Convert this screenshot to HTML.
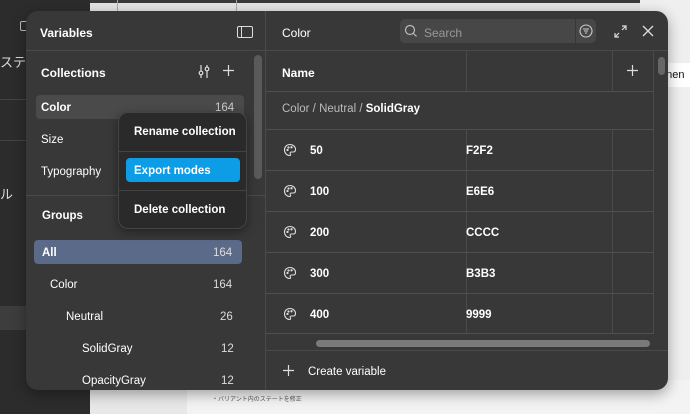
<!DOCTYPE html>
<html><head><meta charset="utf-8"><style>
*{margin:0;padding:0;box-sizing:border-box}
body{width:690px;height:414px;overflow:hidden;position:relative;background:#2c2c2c;font-family:"Liberation Sans","Noto Sans CJK JP",sans-serif;color:#fff;font-size:11.5px}
.a{position:absolute}
.b{font-weight:bold}
.vl{position:absolute;width:1px;background:#4a4a4a}
.cell{position:absolute;height:1px;background:#4f4f4f}
.t{transform:translateY(1px)}
</style></head><body>
<div class="a" style="left:90px;top:0;width:600px;height:11px;background:#e4e4e4"></div>
<div class="a" style="left:90px;top:0;width:600px;height:3px;background:#3a3a3a"></div>
<div class="a" style="left:117px;top:0;width:1px;height:11px;background:#aaa"></div>
<div class="a" style="left:236px;top:0;width:1px;height:11px;background:#aaa"></div>
<div class="a" style="left:640px;top:0;width:50px;height:414px;background:#efefef"></div>
<div class="a" style="left:660px;top:63px;width:30px;height:24px;background:#fff;color:#111;font-size:11px;line-height:24px">onen</div>
<div class="a" style="left:90px;top:380px;width:600px;height:34px;background:#f3f3f3"></div>
<div class="a" style="left:90px;top:380px;width:97px;height:34px;background:#e8e8e8"></div>
<div class="a" style="left:212px;top:394px;font-size:6px;color:#555">・バリアント内のステートを修正</div>
<div class="a" style="left:0;top:99px;width:26px;height:1px;background:#444"></div>
<div class="a" style="left:0;top:140px;width:26px;height:1px;background:#444"></div>
<div class="a" style="left:0;top:306px;width:26px;height:24px;background:#3d3d3d"></div>
<div class="a" style="left:0;top:52px;font-size:13px;color:#ddd">ステム</div>
<div class="a" style="left:0;top:184px;font-size:13px;color:#ddd">ル</div>
<div class="a" style="left:20px;top:21px;width:8px;height:10px;border:1px solid #bbb;border-radius:2px"></div>
<div class="a t" style="left:26px;top:11px;width:642px;height:379px;background:#383838;border-radius:12px;box-shadow:0 4px 14px rgba(0,0,0,.35);overflow:hidden;transform:none">
 <div class="a b t" style="left:14px;top:14px;font-size:12px">Variables</div>
 <div class="a" style="left:211px;top:15px;width:16px;height:12px;border:1.3px solid #ddd;border-radius:2px"><div class="a" style="left:3px;top:0;width:1.3px;height:10px;background:#ddd"></div></div>
 <div class="a" style="left:0;top:39px;width:642px;height:1px;background:#4a4a4a"></div>
 <div class="a" style="left:239px;top:0;width:1px;height:379px;background:#4a4a4a"></div>
 <div class="a b t" style="left:15px;top:54px;font-size:12px">Collections</div>
 <svg class="a" style="left:171px;top:53px" width="14" height="14" viewBox="0 0 14 14" fill="none" stroke="#ddd" stroke-width="1.2"><path d="M4 1v13M10 1v13"/><circle cx="4" cy="9" r="1.8" fill="#383838"/><circle cx="10" cy="5" r="1.8" fill="#383838"/></svg>
 <svg class="a" style="left:197px;top:54px" width="11" height="11" viewBox="0 0 11 11" stroke="#ddd" stroke-width="1.2"><path d="M5.5 0v11M0 5.5h11"/></svg>
 <div class="a" style="left:10px;top:84px;width:208px;height:24px;background:#4a4a4a;border-radius:4px"></div>
 <div class="a b t" style="left:15px;top:90px">Color</div>
 <div class="a t" style="left:189px;top:90px;color:#ccc">164</div>
 <div class="a t" style="left:15px;top:122px">Size</div>
 <div class="a t" style="left:15px;top:154px">Typography</div>
 <div class="a" style="left:0;top:184px;width:239px;height:1px;background:#4a4a4a"></div>
 <div class="a b t" style="left:16px;top:198px">Groups</div>
 <div class="a" style="left:8px;top:229px;width:208px;height:24px;background:#5a6a88;border-radius:4px"></div>
 <div class="a b t" style="left:16px;top:235px">All</div>
 <div class="a t" style="left:187px;top:235px;color:#ddd">164</div>
 <div class="a t" style="left:24px;top:267px">Color</div><div class="a t" style="left:187px;top:267px;color:#ddd">164</div>
 <div class="a t" style="left:40px;top:299px">Neutral</div><div class="a t" style="left:194px;top:299px;color:#ddd">26</div>
 <div class="a t" style="left:56px;top:331px">SolidGray</div><div class="a t" style="left:195px;top:331px;color:#ddd">12</div>
 <div class="a t" style="left:56px;top:363px">OpacityGray</div><div class="a t" style="left:195px;top:363px;color:#ddd">12</div>
 <div class="a" style="left:228px;top:44px;width:8px;height:124px;background:#5a5a5a;border-radius:4px"></div>
 <div class="a t" style="left:256px;top:14px;font-size:12px">Color</div>
 <div class="a" style="left:374px;top:8px;width:196px;height:24px;background:#474747;border-radius:5px"></div>
 <div class="a" style="left:549px;top:8px;width:1px;height:24px;background:#383838"></div>
 <svg class="a" style="left:378px;top:13px" width="14" height="14" viewBox="0 0 14 14" fill="none" stroke="#bbb" stroke-width="1.2"><circle cx="6" cy="6" r="4.5"/><path d="M9.5 9.5l3 3"/></svg>
 <div class="a t" style="left:398px;top:14px;color:#999;font-size:12px">Search</div>
 <svg class="a" style="left:553px;top:13px" width="14" height="14" viewBox="0 0 14 14" fill="none" stroke="#ccc" stroke-width="1.1"><circle cx="7" cy="7" r="6"/><path d="M4 5h6M5 7h4M6 9h2"/></svg>
 <svg class="a" style="left:588px;top:14px" width="13" height="13" viewBox="0 0 13 13" fill="none" stroke="#ddd" stroke-width="1.2"><path d="M8 1h4v4M12 1L8 5M5 12H1V8M1 12l4-4"/></svg>
 <svg class="a" style="left:616px;top:14px" width="12" height="12" viewBox="0 0 12 12" fill="none" stroke="#ddd" stroke-width="1.3"><path d="M1 1l10 10M11 1L1 11"/></svg>
 <div class="a b t" style="left:256px;top:54px;font-size:12px">Name</div>
 <svg class="a" style="left:601px;top:54px" width="11" height="11" viewBox="0 0 11 11" stroke="#ddd" stroke-width="1.2"><path d="M5.5 0v11M0 5.5h11"/></svg>
 <div class="a t" style="left:256px;top:91px;color:#bbb">Color / Neutral / <b style="color:#fff">SolidGray</b></div>
 <div class="vl" style="left:440px;top:40px;height:40px"></div>
 <div class="vl" style="left:586px;top:40px;height:40px"></div>
 <div class="vl" style="left:440px;top:118px;height:204px"></div>
 <div class="vl" style="left:586px;top:118px;height:204px"></div>
 <div class="vl" style="left:627px;top:40px;height:283px"></div>
 <div class="cell" style="left:240px;top:80px;width:388px"></div>
 <div class="cell" style="left:240px;top:118px;width:388px"></div>
 <div class="cell" style="left:240px;top:159px;width:388px"></div>
 <div class="cell" style="left:240px;top:200px;width:388px"></div>
 <div class="cell" style="left:240px;top:241px;width:388px"></div>
 <div class="cell" style="left:240px;top:282px;width:388px"></div>
 <div class="cell" style="left:240px;top:322px;width:388px"></div>
 <div class="a" style="left:632px;top:46px;width:7px;height:18px;background:#666;border-radius:4px"></div>
 <div class="a" style="left:290px;top:329px;width:334px;height:7px;background:#7a7a7a;border-radius:4px"></div>
 <div class="a" style="left:240px;top:339px;width:402px;height:1px;background:#4a4a4a"></div>
 <svg class="a" style="left:257px;top:354px" width="11" height="11" viewBox="0 0 11 11" stroke="#ddd" stroke-width="1.2"><path d="M5.5 0v11M0 5.5h11"/></svg>
 <div class="a t" style="left:282px;top:354px">Create variable</div>
</div>
<div class="a b t" style="left:310px;top:144px">50</div><div class="a b t" style="left:466px;top:144px">F2F2</div>
<div class="a b t" style="left:310px;top:185px">100</div><div class="a b t" style="left:466px;top:185px">E6E6</div>
<div class="a b t" style="left:310px;top:226px">200</div><div class="a b t" style="left:466px;top:226px">CCCC</div>
<div class="a b t" style="left:310px;top:267px">300</div><div class="a b t" style="left:466px;top:267px">B3B3</div>
<div class="a b t" style="left:310px;top:308px">400</div><div class="a b t" style="left:466px;top:308px">9999</div>
<svg class="a" style="left:283px;top:143px" width="14" height="14" viewBox="0 0 14 14" fill="none" stroke="#ddd" stroke-width="1.1"><path d="M7 1.5C3.5 1.5 1.5 4 1.5 7s2.3 5.5 5 5.5c1.2 0 1.3-1 .8-1.7-.5-.8 0-1.8 1-1.8h2c1.5 0 2.2-1 2.2-2.5 0-2.8-2.5-5-5.5-5z"/><circle cx="4.5" cy="7" r=".6" fill="#ddd"/><circle cx="5.5" cy="4.5" r=".6" fill="#ddd"/><circle cx="8.5" cy="4.3" r=".6" fill="#ddd"/></svg>
<svg class="a" style="left:283px;top:184px" width="14" height="14" viewBox="0 0 14 14" fill="none" stroke="#ddd" stroke-width="1.1"><path d="M7 1.5C3.5 1.5 1.5 4 1.5 7s2.3 5.5 5 5.5c1.2 0 1.3-1 .8-1.7-.5-.8 0-1.8 1-1.8h2c1.5 0 2.2-1 2.2-2.5 0-2.8-2.5-5-5.5-5z"/><circle cx="4.5" cy="7" r=".6" fill="#ddd"/><circle cx="5.5" cy="4.5" r=".6" fill="#ddd"/><circle cx="8.5" cy="4.3" r=".6" fill="#ddd"/></svg>
<svg class="a" style="left:283px;top:225px" width="14" height="14" viewBox="0 0 14 14" fill="none" stroke="#ddd" stroke-width="1.1"><path d="M7 1.5C3.5 1.5 1.5 4 1.5 7s2.3 5.5 5 5.5c1.2 0 1.3-1 .8-1.7-.5-.8 0-1.8 1-1.8h2c1.5 0 2.2-1 2.2-2.5 0-2.8-2.5-5-5.5-5z"/><circle cx="4.5" cy="7" r=".6" fill="#ddd"/><circle cx="5.5" cy="4.5" r=".6" fill="#ddd"/><circle cx="8.5" cy="4.3" r=".6" fill="#ddd"/></svg>
<svg class="a" style="left:283px;top:266px" width="14" height="14" viewBox="0 0 14 14" fill="none" stroke="#ddd" stroke-width="1.1"><path d="M7 1.5C3.5 1.5 1.5 4 1.5 7s2.3 5.5 5 5.5c1.2 0 1.3-1 .8-1.7-.5-.8 0-1.8 1-1.8h2c1.5 0 2.2-1 2.2-2.5 0-2.8-2.5-5-5.5-5z"/><circle cx="4.5" cy="7" r=".6" fill="#ddd"/><circle cx="5.5" cy="4.5" r=".6" fill="#ddd"/><circle cx="8.5" cy="4.3" r=".6" fill="#ddd"/></svg>
<svg class="a" style="left:283px;top:307px" width="14" height="14" viewBox="0 0 14 14" fill="none" stroke="#ddd" stroke-width="1.1"><path d="M7 1.5C3.5 1.5 1.5 4 1.5 7s2.3 5.5 5 5.5c1.2 0 1.3-1 .8-1.7-.5-.8 0-1.8 1-1.8h2c1.5 0 2.2-1 2.2-2.5 0-2.8-2.5-5-5.5-5z"/><circle cx="4.5" cy="7" r=".6" fill="#ddd"/><circle cx="5.5" cy="4.5" r=".6" fill="#ddd"/><circle cx="8.5" cy="4.3" r=".6" fill="#ddd"/></svg>
<div class="a" style="left:118px;top:112px;width:129px;height:117px;background:#2a2a2a;border-radius:10px;border:1px solid #444;box-shadow:0 3px 10px rgba(0,0,0,.4)">
 <div class="a b t" style="left:15px;top:12px">Rename collection</div>
 <div class="a" style="left:0;top:38px;width:127px;height:1px;background:#444"></div>
 <div class="a" style="left:7px;top:45px;width:114px;height:24px;background:#0c9de6;border-radius:4px"></div>
 <div class="a b t" style="left:15px;top:51px">Export modes</div>
 <div class="a" style="left:0;top:77px;width:127px;height:1px;background:#444"></div>
 <div class="a b t" style="left:15px;top:90px">Delete collection</div>
</div>
</body></html>
